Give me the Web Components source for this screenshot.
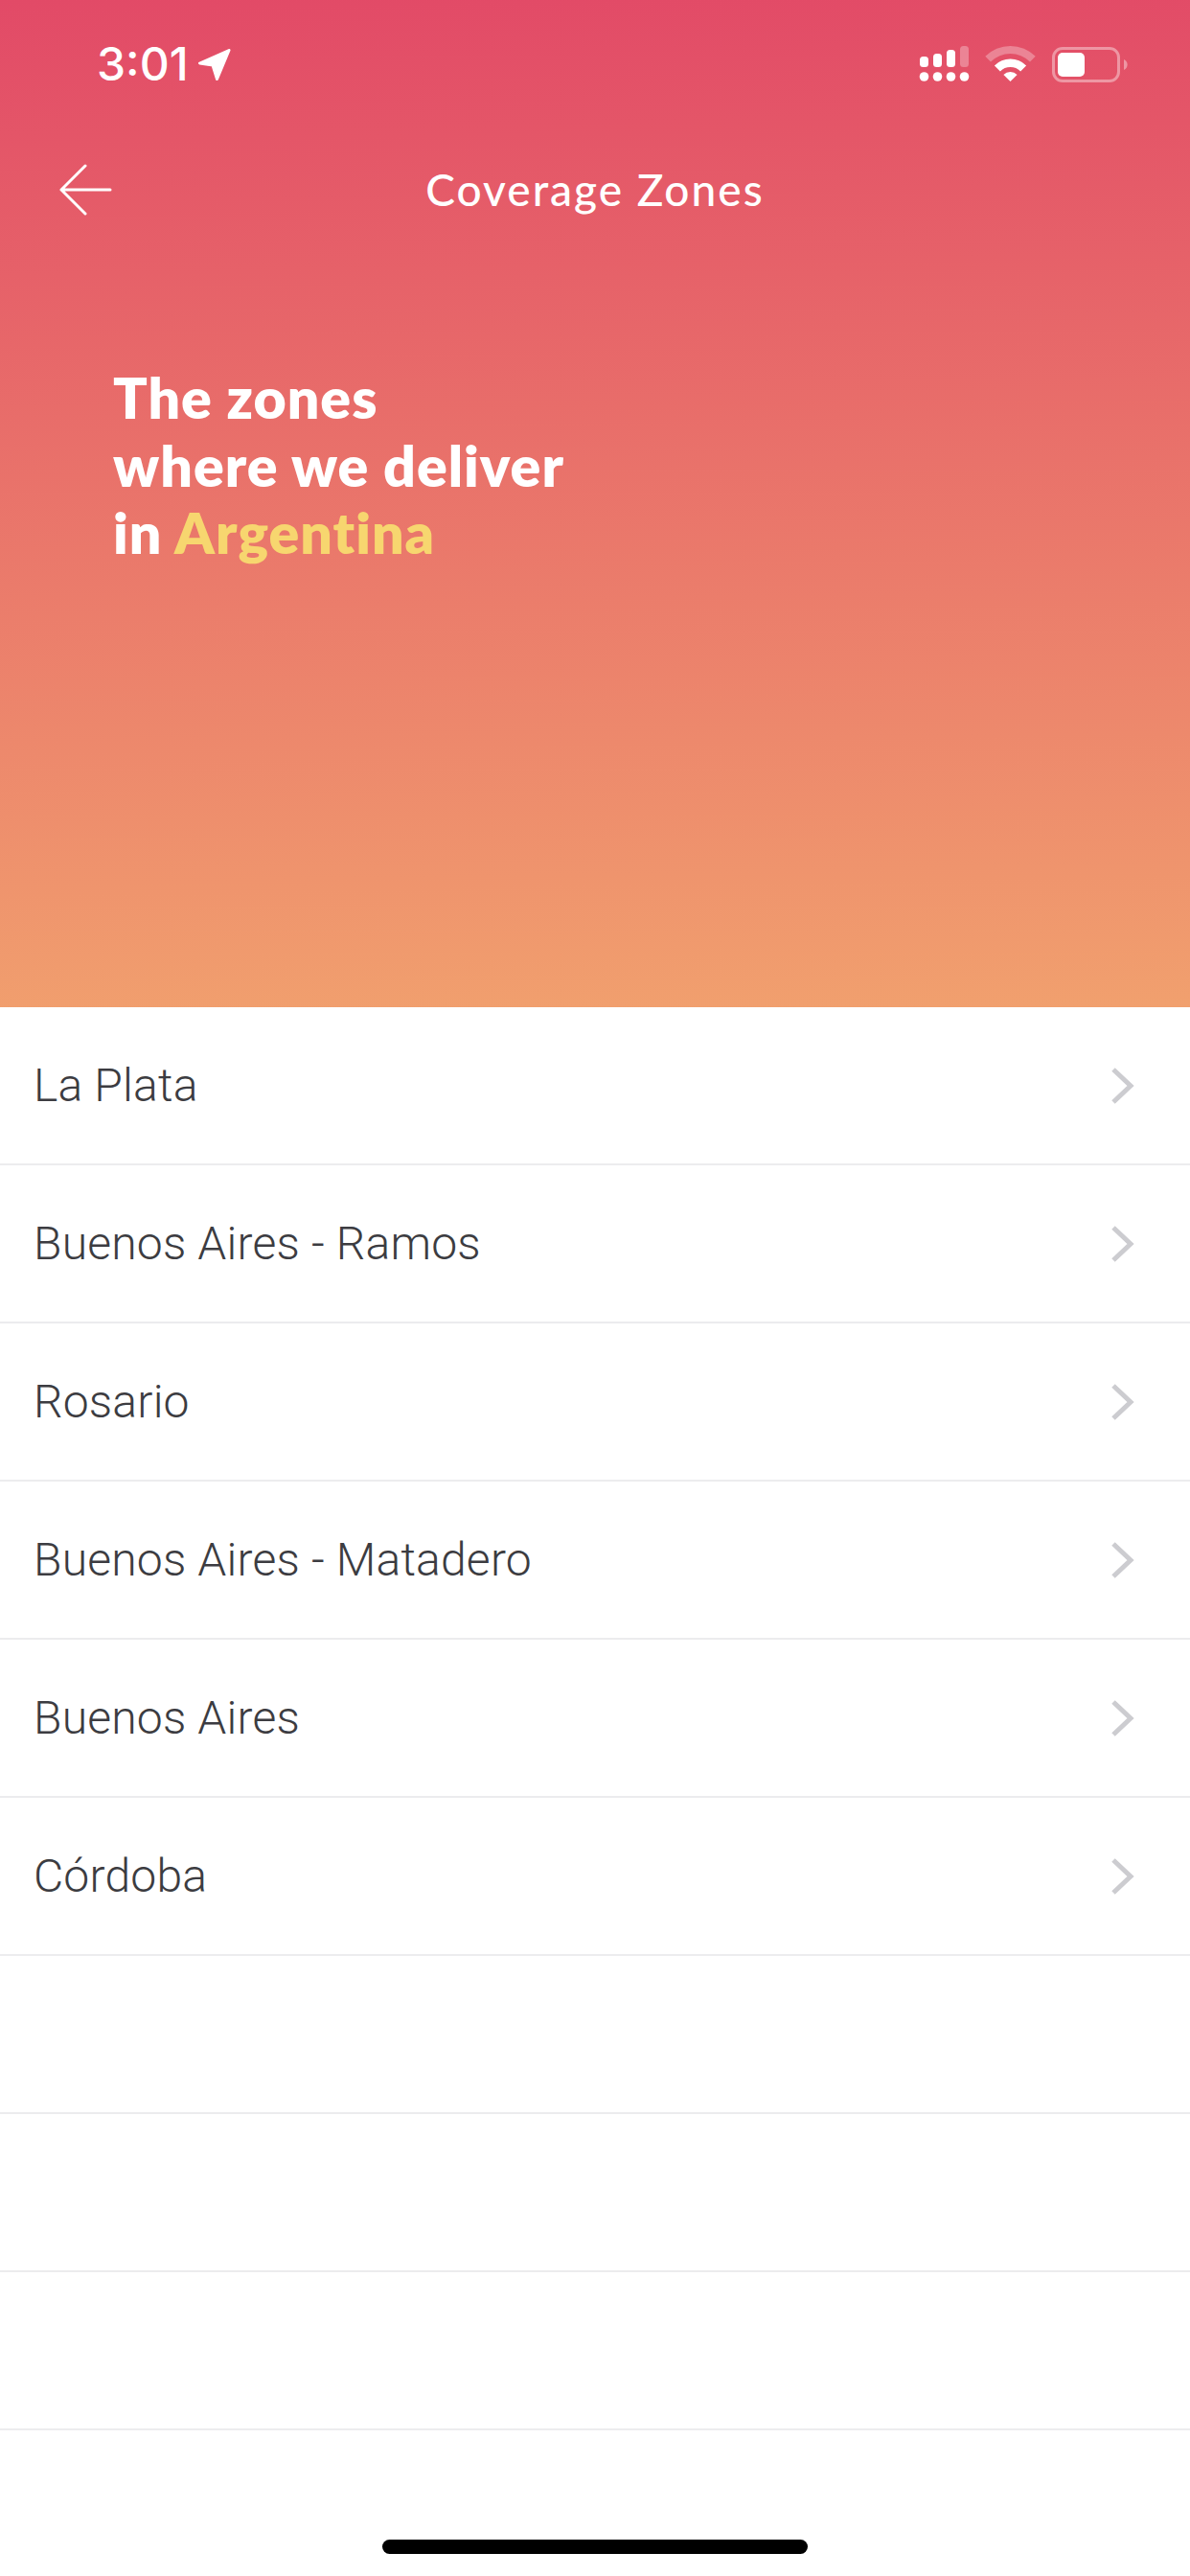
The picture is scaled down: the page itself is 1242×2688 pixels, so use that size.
<!DOCTYPE html>
<html lang="en">
<head>
<meta charset="utf-8">
<title>Coverage Zones</title>
<style>
  html, body { margin: 0; background: #fff; }
  body { width: 1242px; height: 2688px; overflow: hidden; font-family: "Lato", "Liberation Sans", sans-serif; }
</style>
</head>
<body>
<zones-hero>
  <status-bar slot="status" time="3:01"></status-bar>
  <nav-bar slot="nav">Coverage Zones</nav-bar>
  The zones<br>where we deliver<br>in <em>Argentina</em>
</zones-hero>
<zone-list>
  <zone-row>La Plata</zone-row>
  <zone-row>Buenos Aires - Ramos</zone-row>
  <zone-row>Rosario</zone-row>
  <zone-row>Buenos Aires - Matadero</zone-row>
  <zone-row>Buenos Aires</zone-row>
  <zone-row>Córdoba</zone-row>
  <zone-row empty></zone-row>
  <zone-row empty></zone-row>
  <zone-row empty></zone-row>
</zone-list>
<home-indicator></home-indicator>

<script>
/**
 * Coverage Zones screen. Every block is its own custom element:
 *   <zones-hero>, <status-bar>, <nav-bar>, <zone-list>, <zone-row>, <home-indicator>
 */

class StatusBar extends HTMLElement {
  connectedCallback() {
    if (this.shadowRoot) return;
    this.attachShadow({ mode: 'open' });
    this.shadowRoot.innerHTML = `
      <style>
        :host {
          display: flex;
          align-items: flex-start;
          justify-content: space-between;
          height: 110px;
          padding: 42px 65px 0 101px;
          box-sizing: border-box;
          color: #fff;
        }
        .left { display: flex; align-items: center; gap: 10px; }
        .time {
          font: 500 48px/50px "Inter", "Liberation Sans", sans-serif;
        }
        .levels { margin-top: 5px; }
        svg { display: block; }
      </style>
      <div class="left">
        <span class="time">${this.getAttribute('time')}</span>
        <svg width="34" height="34" viewBox="0 0 34 34" fill="#fff" stroke="#fff" stroke-width="3" stroke-linejoin="round">
          <path d="M32 2.500 L1.500 16 L15 18 L19.500 32.500 Z"/>
        </svg>
      </div>
      <svg class="levels" width="220" height="40" viewBox="0 0 220 40" fill="#fff">
        <rect x="3" y="12" width="9" height="11" rx="3.500"/>
        <rect x="17" y="9" width="9" height="14" rx="3.500"/>
        <rect x="31" y="5" width="9" height="18" rx="3.500"/>
        <rect x="45" y="1" width="9" height="22" rx="3.500" opacity=".3"/>
        <circle cx="7.500" cy="33" r="4.800"/>
        <circle cx="21.500" cy="33" r="4.800"/>
        <circle cx="35.500" cy="33" r="4.800"/>
        <circle cx="49.500" cy="33" r="4.800"/>
        <path d="M71.300 11.800 A37 37 0 0 1 123.700 11.800 L118 17.500 A29 29 0 0 0 77 17.500 Z" opacity=".3"/>
        <path d="M80.900 21.400 A23.500 23.500 0 0 1 114.100 21.400 L108.100 27.400 A15 15 0 0 0 86.900 27.400 Z"/>
        <path d="M90.400 30.900 A10 10 0 0 1 104.600 30.900 L97.500 38 Z"/>
        <rect x="142.500" y="3.500" width="68" height="34" rx="9.500" fill="none" stroke="#fff" stroke-width="3" opacity=".4"/>
        <rect x="147" y="8" width="28" height="25" rx="5"/>
        <path d="M216 15 A6 6 0 0 1 216 26 Z" opacity=".4"/>
      </svg>
    `;
  }
}

class NavBar extends HTMLElement {
  constructor() {
    super();
    this.attachShadow({ mode: 'open' });
    this.shadowRoot.innerHTML = `
      <style>
        :host {
          display: grid;
          grid-template-columns: 1fr auto 1fr;
          align-items: center;
          height: 62px;
          padding: 0 60px;
          margin-top: 56px;
          color: #fff;
        }
        .title {
          padding-top: 1px;
          font: 500 46px/62px "Lato", "Liberation Sans", sans-serif;
          letter-spacing: 2px;
          white-space: nowrap;
        }
        svg { display: block; }
      </style>
      <svg width="58" height="54" viewBox="0 0 58 54" fill="none" stroke="#fff" stroke-width="3" stroke-linecap="round" stroke-linejoin="round">
        <path d="M29 2 L4 27 L29 52 M4 27 H55"/>
      </svg>
      <div class="title"><slot></slot></div>
      <span></span>
    `;
  }
}

class ZonesHero extends HTMLElement {
  constructor() {
    super();
    this.attachShadow({ mode: 'open' });
    this.shadowRoot.innerHTML = `
      <style>
        :host {
          display: block;
          height: 1051px;
          background: linear-gradient(179deg, #e24a67 0%, #f1a06e 100%);
          color: #fff;
        }
        h1 {
          margin: 0;
          padding: 152px 0 0 118px;
          font: 800 59px/70.500px "Lato", "Liberation Sans", sans-serif;
          letter-spacing: 1px;
        }
        ::slotted(em) { font-style: normal; color: #f7d66f; }
      </style>
      <slot name="status"></slot>
      <slot name="nav"></slot>
      <h1><slot></slot></h1>
    `;
  }
}

class ZoneList extends HTMLElement {
  constructor() {
    super();
    this.attachShadow({ mode: 'open' });
    this.shadowRoot.innerHTML = `
      <style>
        :host { display: flex; flex-direction: column; background: #fff; }
      </style>
      <slot></slot>
    `;
  }
}

class ZoneRow extends HTMLElement {
  constructor() {
    super();
    this.attachShadow({ mode: 'open' });
    this.shadowRoot.innerHTML = `
      <style>
        :host {
          display: flex;
          align-items: center;
          justify-content: space-between;
          height: 165px;
          padding: 0 58px 0 35px;
          box-sizing: border-box;
          border-bottom: 2px solid #ececee;
          font: 300 48px/1 "Roboto", "Liberation Sans", sans-serif;
          letter-spacing: .200px;
          color: #3c3c41;
        }
        :host([empty]) svg { display: none; }
        svg { display: block; }
      </style>
      <slot></slot>
      <svg width="24" height="38" viewBox="0 0 24 38" fill="none" stroke="#ccccd0" stroke-width="5">
        <path d="M2 2 L20 19 L2 36"/>
      </svg>
    `;
  }
}

class HomeIndicator extends HTMLElement {
  constructor() {
    super();
    this.attachShadow({ mode: 'open' });
    this.shadowRoot.innerHTML = `
      <style>
        :host { display: flex; justify-content: center; padding-top: 114px; }
        div { width: 444px; height: 15px; border-radius: 8px; background: #000; }
      </style>
      <div></div>
    `;
  }
}

customElements.define('status-bar', StatusBar);
customElements.define('nav-bar', NavBar);
customElements.define('zones-hero', ZonesHero);
customElements.define('zone-list', ZoneList);
customElements.define('zone-row', ZoneRow);
customElements.define('home-indicator', HomeIndicator);
</script>
</body>
</html>
